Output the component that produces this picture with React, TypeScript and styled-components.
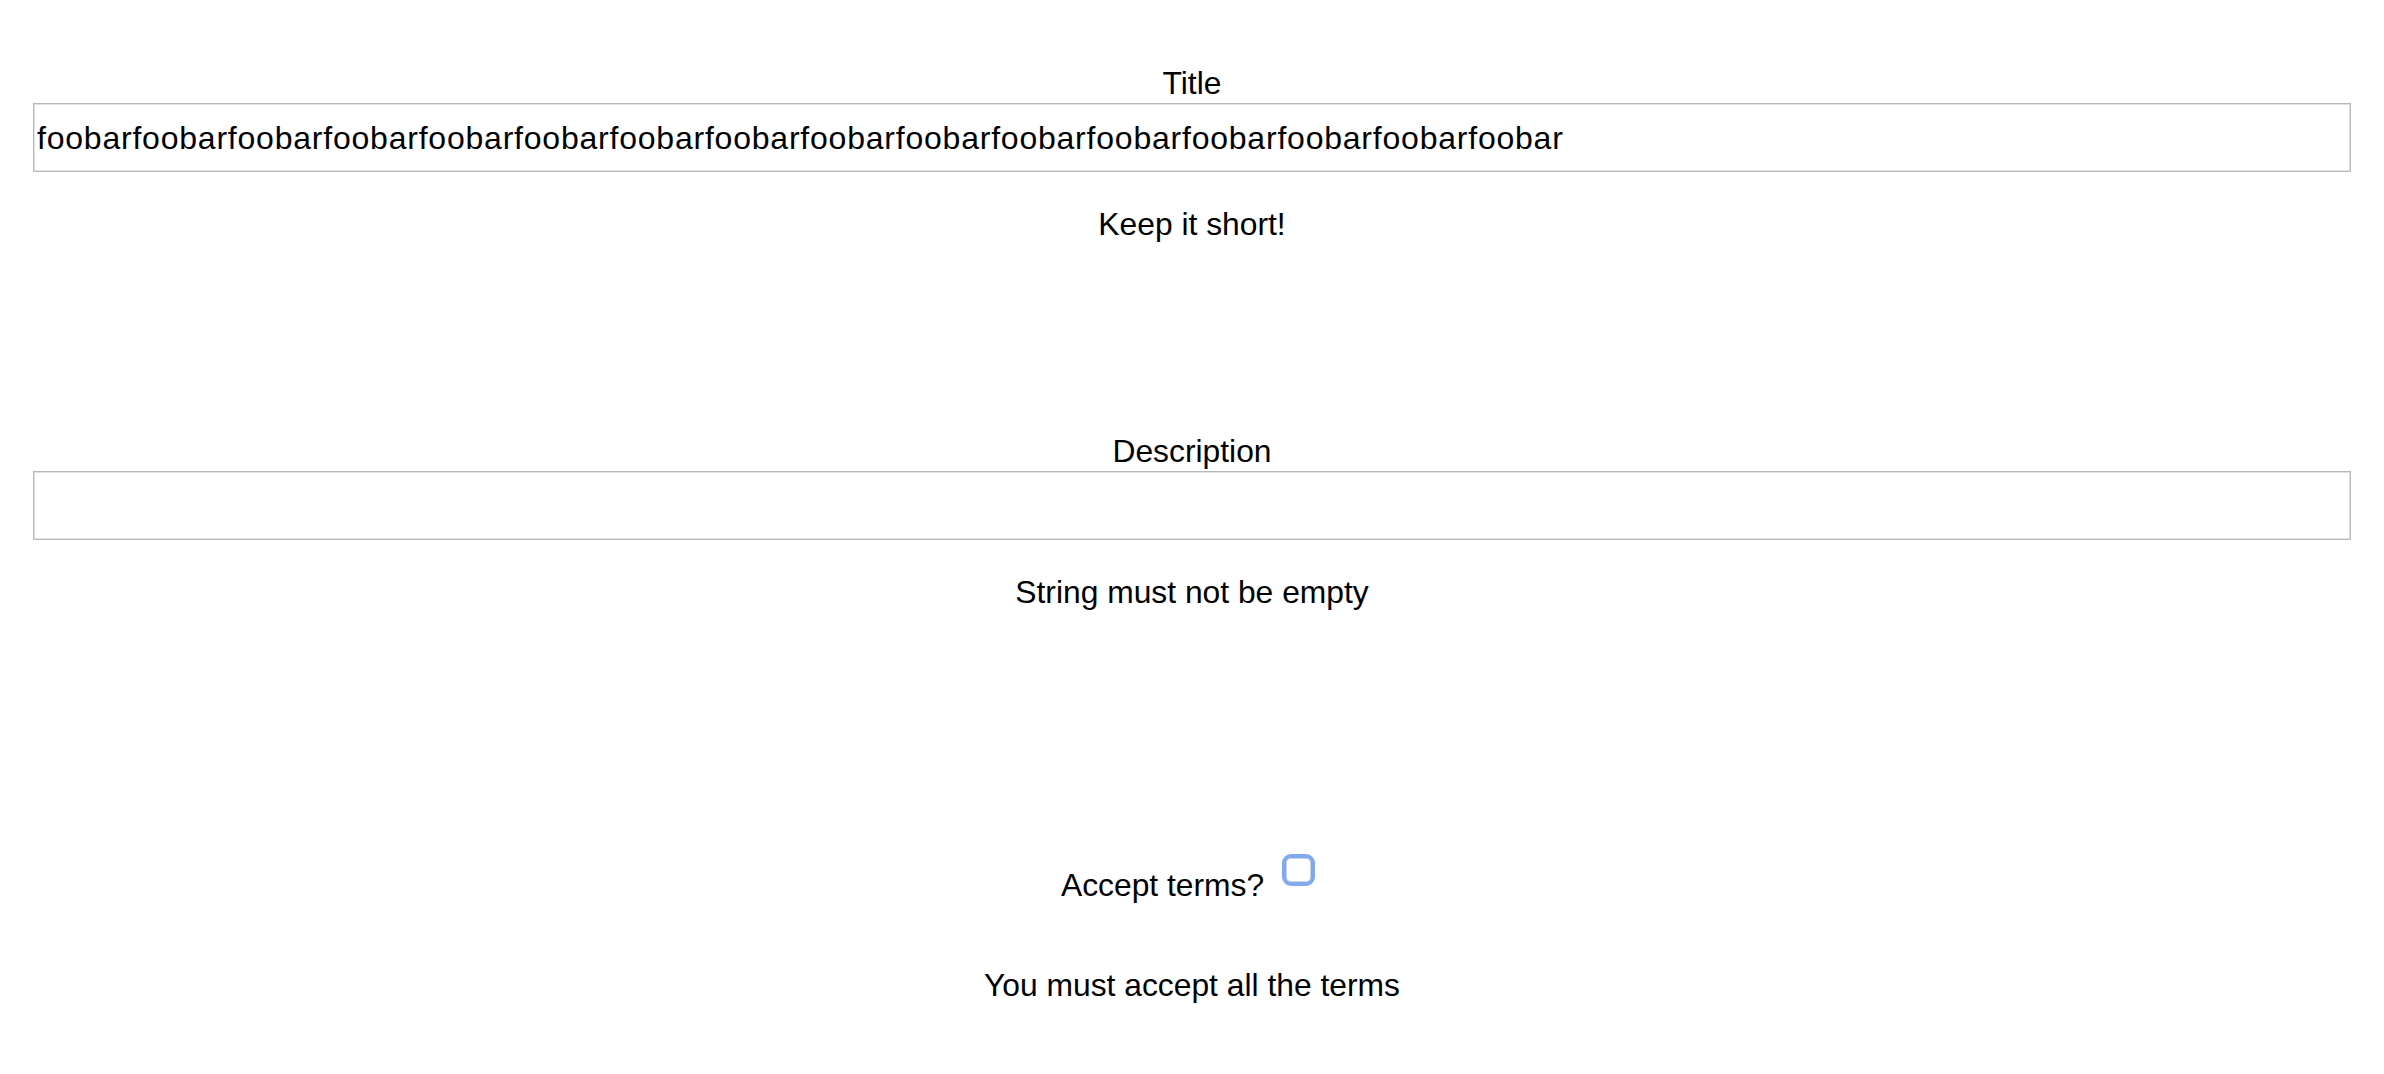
import React, { useState } from 'react';
import styled, { createGlobalStyle } from 'styled-components';

const GlobalStyle = createGlobalStyle`
  html, body {
    margin: 0;
    padding: 0;
    background: #ffffff;
  }
  body {
    font-family: 'Liberation Sans', Arial, Helvetica, sans-serif;
    color: #000000;
  }
`;

const Form = styled.form`
  padding: 65px 33px 0;
  box-sizing: border-box;
  width: 100%;
`;

const Field = styled.div<{ $after: number }>`
  display: flex;
  flex-direction: column;
  margin-bottom: ${props => props.$after}px;
`;

const Label = styled.label`
  display: block;
  text-align: center;
  font-size: 31.8px;
  line-height: 36px;
  margin: 0 0 2px;
`;

const TextInput = styled.input`
  display: block;
  width: 100%;
  height: 69px;
  box-sizing: border-box;
  margin: 0;
  padding: 2px 3px 0;
  border: 1px solid #b9b9b9;
  box-shadow: inset 0 0 0 1px #e2e2e2;
  border-radius: 0;
  background: #ffffff;
  font-family: 'Liberation Sans', Arial, Helvetica, sans-serif;
  font-size: 32px;
  letter-spacing: 0.78px;
  color: #000000;
  outline: none;
`;

const ErrorText = styled.p<{ $top?: number }>`
  margin: ${props => props.$top ?? 34}px 0 0;
  text-align: center;
  font-size: 31.8px;
  line-height: 36px;
`;

const CheckRow = styled.div`
  text-align: center;
  font-size: 31.8px;
  line-height: 36px;
`;

const Checkbox = styled.input`
  appearance: none;
  -webkit-appearance: none;
  display: inline-block;
  vertical-align: baseline;
  width: 33px;
  height: 32px;
  box-sizing: border-box;
  margin: 0 8px 10px 9px;
  border: 4px solid #80a9ee;
  border-radius: 9px;
  background: #ffffff;
  box-shadow: inset 0 0 0 1px #c9d3e4;
  cursor: pointer;

  &:checked {
    background: #80a9ee;
  }
`;

export default function App() {
  const [title, setTitle] = useState('foobar'.repeat(16));
  const [description, setDescription] = useState('');
  const [accepted, setAccepted] = useState(false);

  return (
    <>
      <GlobalStyle />
      <Form onSubmit={e => e.preventDefault()}>
        <Field $after={191}>
          <Label htmlFor="title">Title</Label>
          <TextInput id="title" value={title} onChange={e => setTitle(e.target.value)} />
          <ErrorText>Keep it short!</ErrorText>
        </Field>

        <Field $after={244}>
          <Label htmlFor="description">Description</Label>
          <TextInput
            id="description"
            value={description}
            onChange={e => setDescription(e.target.value)}
          />
          <ErrorText>String must not be empty</ErrorText>
        </Field>

        <CheckRow>
          <label htmlFor="terms">Accept terms?</label>{' '}
          <Checkbox
            id="terms"
            type="checkbox"
            checked={accepted}
            onChange={e => setAccepted(e.target.checked)}
          />
        </CheckRow>
        <ErrorText $top={64}>You must accept all the terms</ErrorText>
      </Form>
    </>
  );
}
